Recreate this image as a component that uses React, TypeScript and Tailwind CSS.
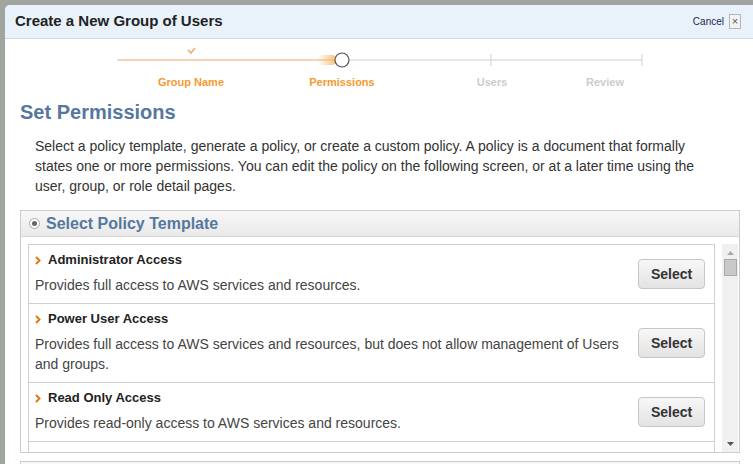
import React from 'react';

const font = { fontFamily: '"Liberation Sans", Arial, sans-serif' };

const policies = [
    { name: 'Administrator Access', desc: 'Provides full access to AWS services and resources.' },
    {
        name: 'Power User Access',
        desc: 'Provides full access to AWS services and resources, but does not allow management of Users and groups.',
    },
    { name: 'Read Only Access', desc: 'Provides read-only access to AWS services and resources.' },
];

const Chevron = () => (
    <svg width="6" height="9" viewBox="0 0 6 9" className="shrink-0">
        <path d="M1 1 L4.5 4.5 L1 8" stroke="#e07b12" strokeWidth="2" fill="none" />
    </svg>
);

const Stepper = () => (
    <div className="relative h-[57px] shrink-0">
        <svg width="748" height="30" className="absolute left-0 top-0">
            <defs>
                <linearGradient id="glow" x1="0" x2="1">
                    <stop offset="0" stopColor="#f5c27c" stopOpacity="0" />
                    <stop offset="1" stopColor="#f5b45a" stopOpacity="0.9" />
                </linearGradient>
            </defs>
            <line x1="112" y1="21" x2="330" y2="21" stroke="#e9ab6c" strokeWidth="1" />
            <rect x="312" y="16" width="20" height="10" rx="5" fill="url(#glow)" />
            <line x1="344" y1="21" x2="637" y2="21" stroke="#cfcfcf" strokeWidth="1" />
            <line x1="486" y1="15" x2="486" y2="27" stroke="#cfcfcf" strokeWidth="1" />
            <line x1="637" y1="15" x2="637" y2="27" stroke="#cfcfcf" strokeWidth="1" />
            <circle cx="337" cy="21" r="7" fill="#fff" stroke="#555" strokeWidth="1.2" />
            <path d="M183 11 L186 14 L190 9" stroke="#ecb47a" strokeWidth="1.8" fill="none" />
        </svg>
        <div className="absolute left-0 top-[36px] flex text-[11px] font-bold leading-[14px]">
            <div className="ml-[136px] w-[100px] text-center text-[#f39a31]">Group Name</div>
            <div className="ml-[51px] w-[100px] text-center text-[#f39a31]">Permissions</div>
            <div className="ml-[50px] w-[100px] text-center text-[#cccccc]">Users</div>
            <div className="ml-[13px] w-[100px] text-center text-[#cccccc]">Review</div>
        </div>
    </div>
);

const App = () => {
    return (
        <div className="flex h-[464px] w-[753px] overflow-hidden bg-[#a0a59f] pl-[5px] pt-[5px]" style={font}>
            <div className="flex flex-1 flex-col overflow-hidden rounded-tl-[5px] bg-white">
                <div className="flex h-[34px] shrink-0 items-center border-b border-[#c8d9ed] bg-[#e9f2fb] pl-[10px] pr-[12px]">
                    <div className="flex-1 text-[15px] font-bold text-[#222]">Create a New Group of Users</div>
                    <span className="mr-[5px] text-[10px] text-[#1c2550]">Cancel</span>
                    <span className="flex h-[15px] w-[12px] items-center justify-center border border-[#b5b5b5] bg-[#f3f3f3] text-[11px] leading-none text-[#555]">
                        ×
                    </span>
                </div>
                <Stepper />
                <div className="shrink-0 pl-[15px] pr-[13px]">
                    <h1 className="mt-[4px] text-[20px] font-bold leading-[24px] text-[#56779f]">Set Permissions</h1>
                    <p className="mt-[12px] w-[690px] pl-[15px] text-[14px] leading-[20px] text-[#333]">
                        Select a policy template, generate a policy, or create a custom policy. A policy is a document that formally
                        states one or more permissions. You can edit the policy on the following screen, or at a later time using the
                        user, group, or role detail pages.
                    </p>
                    <div className="mt-[14px] flex h-[243px] flex-col border border-[#cccccc]">
                        <div className="flex h-[26px] shrink-0 items-center gap-[6px] border-b border-[#d6d6d6] bg-gradient-to-b from-[#f8f8f8] to-[#e9e9e9] pl-[8px]">
                            <span className="flex h-[11px] w-[11px] items-center justify-center rounded-full border border-[#aaa] bg-white">
                                <span className="h-[5px] w-[5px] rounded-full bg-[#666]" />
                            </span>
                            <span className="text-[16px] font-bold text-[#56779f]">Select Policy Template</span>
                        </div>
                        <div className="flex min-h-0 flex-1 pl-[7px] pt-[7px]">
                            <div className="flex-1 overflow-hidden border-l border-r border-t border-[#d0d0d0]">
                                {policies.map((p) => (
                                    <div key={p.name} className="flex items-center border-b border-[#d0d0d0] pl-[6px] pr-[9px]">
                                        <div className="flex-1 pt-[6px] pb-[8px]">
                                            <div className="flex items-center gap-[7px] text-[13px] font-bold leading-[18px] text-[#222]">
                                                <Chevron />
                                                {p.name}
                                            </div>
                                            <div className="mt-[6px] pr-[10px] text-[14px] leading-[20px] text-[#444]">{p.desc}</div>
                                        </div>
                                        <button className="h-[30px] w-[67px] shrink-0 rounded-[4px] border border-[#c6c6c6] bg-gradient-to-b from-[#f7f7f7] to-[#e3e3e3] text-[14px] font-bold text-[#333]">
                                            Select
                                        </button>
                                    </div>
                                ))}
                                <div className="h-[30px]" />
                            </div>
                            <div className="ml-[7px] flex w-[16px] flex-col items-center bg-[#f0f0f0] pt-[7px] pb-[6px]">
                                <svg width="7" height="4" viewBox="0 0 7 4">
                                    <path d="M0 4 L3.5 0 L7 4 Z" fill="#a8a8a8" />
                                </svg>
                                <div className="mt-[4px] h-[17px] w-[13px] border border-[#a9a9a9] bg-[#c8c8c8]" />
                                <div className="flex-1" />
                                <svg width="7" height="4" viewBox="0 0 7 4">
                                    <path d="M0 0 L3.5 4 L7 0 Z" fill="#555" />
                                </svg>
                            </div>
                            <div className="w-[1px]" />
                        </div>
                    </div>
                    <div className="mt-[8px] h-[20px] border border-[#cccccc] bg-gradient-to-b from-[#f8f8f8] to-[#ececec]" />
                </div>
            </div>
        </div>
    );
};

export default App;
